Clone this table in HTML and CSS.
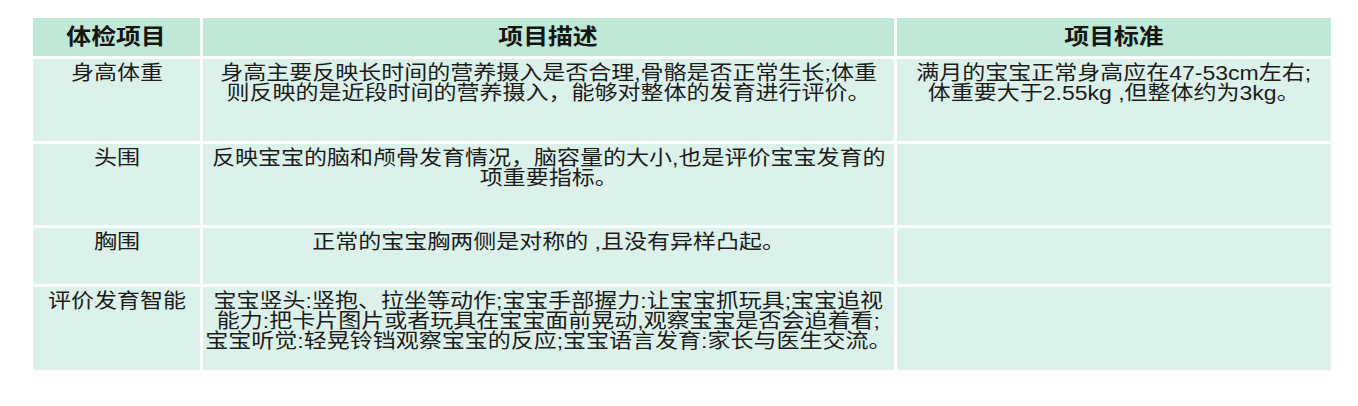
FILE: index.html
```html
<!DOCTYPE html>
<html lang="zh-CN">
<head>
<meta charset="utf-8">
<title>体检项目</title>
<link rel="stylesheet" href="styles.css">
</head>
<body>
<div class="table">
  <div class="th"><span class="txt">体检项目</span></div>
  <div class="th"><span class="txt">项目描述</span></div>
  <div class="th"><span class="txt">项目标准</span></div>

  <div class="td"><span class="txt">身高体重</span></div>
  <div class="td"><span class="txt">身高主要反映长时间的营养摄入是否合理,骨骼是否正常生长;体重<br>则反映的是近段时间的营养摄入，能够对整体的发育进行评价。</span></div>
  <div class="td"><span class="txt">满月的宝宝正常身高应在47-53cm左右;<br>体重要大于2.55kg ,但整体约为3kg。</span></div>

  <div class="td"><span class="txt">头围</span></div>
  <div class="td"><span class="txt">反映宝宝的脑和颅骨发育情况，脑容量的大小,也是评价宝宝发育的<br>项重要指标。</span></div>
  <div class="td"></div>

  <div class="td"><span class="txt">胸围</span></div>
  <div class="td"><span class="txt">正常的宝宝胸两侧是对称的 ,且没有异样凸起。</span></div>
  <div class="td"></div>

  <div class="td"><span class="txt">评价发育智能</span></div>
  <div class="td"><span class="txt">宝宝竖头:竖抱、拉坐等动作;宝宝手部握力:让宝宝抓玩具;宝宝追视<br>能力:把卡片图片或者玩具在宝宝面前晃动,观察宝宝是否会追着看;<br>宝宝听觉:轻晃铃铛观察宝宝的反应;宝宝语言发育:家长与医生交流。</span></div>
  <div class="td"></div>
</div>
</body>
</html>
```
FILE: styles.css
```css
html, body {
  margin: 0;
  padding: 0;
  background: #ffffff;
}
body {
  padding: 18px 0 0 33px;
  font-family: "Liberation Sans", "Noto Sans CJK SC", sans-serif;
  color: #1c1c1c;
}
.table {
  display: grid;
  width: 1298px;
  grid-template-columns: 167px 691px 434px;
  grid-template-rows: 38px 82px 81px 56px 83px;
  column-gap: 3px;
  row-gap: 3px;
}
.txt {
  display: inline-block;
  white-space: nowrap;
  transform-origin: center top;
}
.th {
  background: #bfe8d6;
  font-weight: bold;
  font-size: 22px;
  line-height: 24px;
  display: flex;
  align-items: center;
  justify-content: center;
  color: #151515;
}
.th .txt {
  transform: scaleX(1.13);
}
.td {
  background: #dcf1ea;
  font-size: 20px;
  line-height: 20px;
  text-align: center;
  padding-top: 4px;
}
.td .txt {
  transform: scaleX(1.15);
}
```
